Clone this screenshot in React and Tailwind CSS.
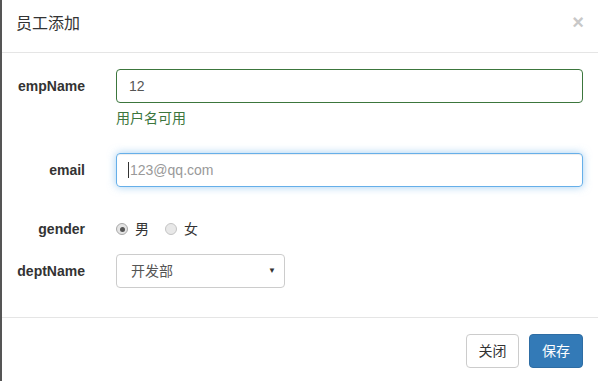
import React from 'react';

const cjk = { fontFamily: '"Liberation Sans", "Noto Sans CJK SC", sans-serif' };

function Label({ children }) {
  return (
    <div className="w-[98px] shrink-0 pr-[15px] text-right text-[14px] font-bold text-[#333]">
      {children}
    </div>
  );
}

function Radio({ checked, text }) {
  return (
    <label className="flex items-center gap-[7px]">
      <span
        className={
          checked
            ? "w-[12px] h-[12px] rounded-full border border-[#a9a9a9] bg-[#e4e4e4] flex items-center justify-center"
            : "w-[12px] h-[12px] rounded-full border border-[#c4c4c4] bg-[#e8e8e8]"
        }
      >
        {checked && <span className="w-[5px] h-[5px] rounded-full bg-[#555]" />}
      </span>
      <span className="text-[14px] text-[#333] leading-[20px]">{text}</span>
    </label>
  );
}

export default function App() {
  return (
    <div className="w-[598px] h-[381px] bg-white border-l-2 border-[#555] flex flex-col" style={cjk}>
      <div className="h-[53px] border-b border-[#e5e5e5] flex items-start justify-between pl-[14px] pr-[14px] pt-[12px]">
        <span className="text-[16px] leading-[24px] text-[#333]">员工添加</span>
        <span className="text-[20px] leading-[20px] font-bold text-[#c8c8c8]">×</span>
      </div>

      <div className="flex items-center mt-[16px]">
        <Label>empName</Label>
        <div className="flex-1 pl-[16px] pr-[15px]">
          <div className="h-[34px] border border-[#3c763d] rounded-[4px] flex items-center px-[12px] text-[14px] text-[#555]">
            12
          </div>
        </div>
      </div>
      <div className="flex mt-[5px]">
        <div className="w-[98px]" />
        <div className="pl-[16px] text-[14px] leading-[20px] text-[#3c763d]">用户名可用</div>
      </div>

      <div className="flex items-center mt-[25px]">
        <Label>email</Label>
        <div className="flex-1 pl-[16px] pr-[15px]">
          <div className="h-[34px] border border-[#66afe9] rounded-[4px] flex items-center pl-[11px] text-[14px] text-[#999] shadow-[inset_0_1px_1px_rgba(0,0,0,0.075),0_0_8px_rgba(102,175,233,0.6)]">
            <span className="w-px h-[16px] bg-[#333] mr-[1px]" />
            123@qq.com
          </div>
        </div>
      </div>

      <div className="flex items-center mt-[32px] h-[20px]">
        <Label>gender</Label>
        <div className="flex items-center gap-[16px] pl-[16px]">
          <Radio checked text="男" />
          <Radio text="女" />
        </div>
      </div>

      <div className="flex items-center mt-[15px]">
        <Label>deptName</Label>
        <div className="pl-[16px]">
          <div className="w-[169px] h-[34px] border border-[#ccc] rounded-[4px] flex items-center justify-between pl-[14px] pr-[8px] text-[14px] text-[#555]">
            <span>开发部</span>
            <span className="text-[8px] text-[#333]">▼</span>
          </div>
        </div>
      </div>

      <div className="mt-[29px] border-t border-[#e5e5e5] flex justify-end gap-[10px] pt-[16px] pr-[15px]">
        <button className="w-[53px] h-[34px] border border-[#ccc] rounded-[4px] bg-white text-[14px] text-[#333]">关闭</button>
        <button className="w-[54px] h-[34px] border border-[#2e6da4] rounded-[4px] bg-[#337ab7] text-[14px] text-white">保存</button>
      </div>
    </div>
  );
}
